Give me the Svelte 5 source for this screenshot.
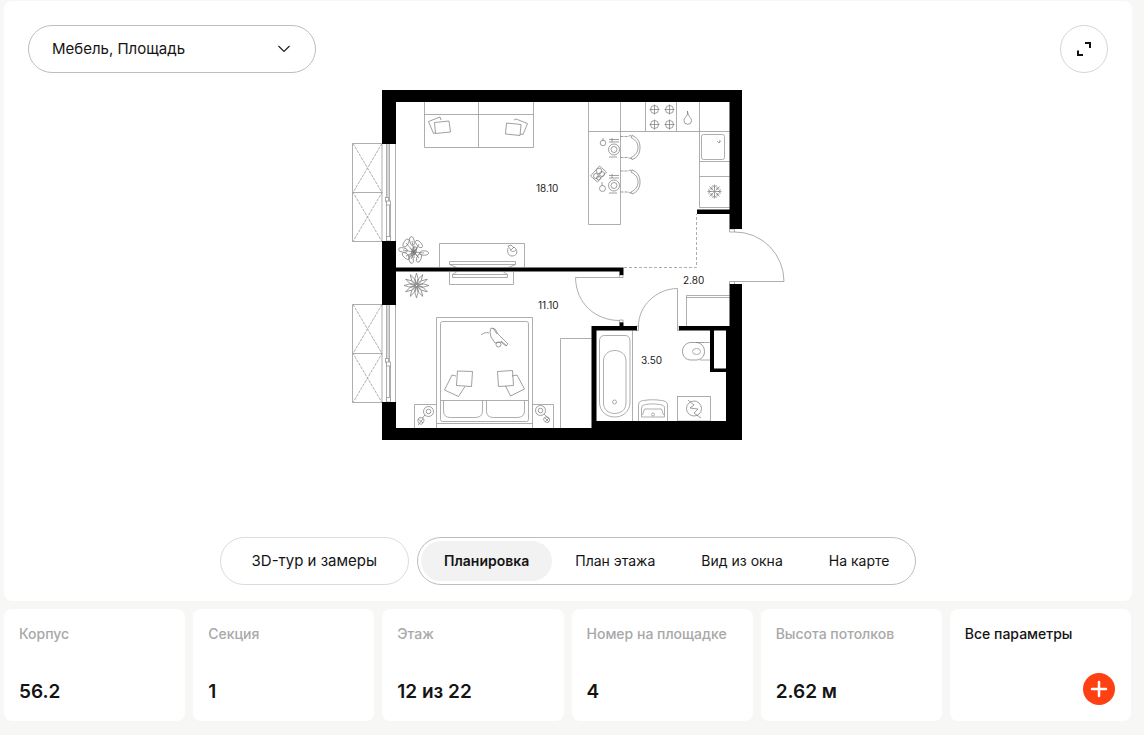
<script lang="ts">
  let filter = $state('furniture-area');
  let activeTab = $state('plan');

  const tabs = [
    { id: 'plan', title: 'Планировка' },
    { id: 'floor', title: 'План этажа' },
    { id: 'view', title: 'Вид из окна' },
    { id: 'map', title: 'На карте' }
  ];

  const params = [
    { label: 'Корпус', value: '56.2' },
    { label: 'Секция', value: '1' },
    { label: 'Этаж', value: '12 из 22' },
    { label: 'Номер на площадке', value: '4' },
    { label: 'Высота потолков', value: '2.62 м' }
  ];

  const rooms = [
    { x: 536, y: 192, area: '18.10' },
    { x: 538, y: 309, area: '11.10' },
    { x: 683, y: 284, area: '2.80' },
    { x: 641, y: 364, area: '3.50' }
  ];

  // top edges of the two balcony windows
  const windows = [143.5, 304.5];

  const burners = [
    [654.5, 109.5],
    [669.5, 109.5],
    [654.5, 124.5],
    [669.5, 124.5]
  ];

  const starLeaves = Array.from({ length: 12 }, (_, i) => i * 30);
  const snowRays = [0, 90, 180, 270];
</script>

<div class="page">
  <section class="viewer">
    <div class="toolbar">
      <div class="filter">
        <select bind:value={filter} aria-label="Отображение на плане">
          <option value="furniture-area">Мебель, Площадь</option>
        </select>
        <svg class="chevron" width="14" height="8" viewBox="0 0 14 8" aria-hidden="true">
          <path d="M1.500 1l5.500 5.500L12.500 1" fill="none" stroke="#222" stroke-width="1.200" />
        </svg>
      </div>
      <button class="expand" type="button" aria-label="На весь экран">
        <svg width="14" height="14" viewBox="0 0 14 14" aria-hidden="true">
          <path d="M8 1h5v5M1 8.500V13h5" fill="none" stroke="#111" stroke-width="2" />
        </svg>
      </button>
    </div>

    <div class="stage">
      <svg class="plan" viewBox="350 90 436 350" role="img" aria-label="Планировка квартиры">
        <g class="thin">
          {#each windows as y}
            <path d="M352.500 {y}H395.500V{y + 98}H352.500ZM352.500 {y + 49}H382M382 {y}v98" />
            <path class="dash" d="M353 {y}l29 49l-29 49M382 {y}l-29 49l29 49" />
            <path d="M386.500 {y}v98M389.500 {y}v98M388 {y}v54M390.500 {y + 60}v35" />
            <rect x="385.500" y={y + 54} width="3" height="4" fill="#fff" />
            <rect x="386.500" y={y + 57.5} width="4" height="4" fill="#fff" />
            <rect x="386.500" y={y + 93} width="4" height="4.500" fill="#fff" />
          {/each}

          <!-- sofa -->
          <path d="M424.500 102V147.500H533.500V102M424.500 114.500H533.500M478.500 102V147.500" />
          <path class="dark" d="M441 120l-1-3-11.500 4.500 5 12 2-1M434.500 122.500l14.500-1.500 1.500 11-15 1.500z" />
          <path class="dark" d="M514 120l2-1 11.500 4.500-4.500 11-3-.5M506.500 123l14.500 1.500-1 11-14.500-1.500z" />

          <!-- tv stands -->
          <path d="M439.500 267V243.500H524.500V267M449.500 261.500H515.500V264.500H449.500ZM449.500 264.500l7 3M515.500 264.500l-7 3" />
          <path d="M449.500 272V284.500H513.500V272M452.500 274.500H507.500V277.500H452.500ZM452.500 274.500l4-2.500M507.500 274.500l-4-2.500" />
          <path class="dark" d="M508 248c-1 4 0 8 4 8s6-3 4-7l-2-2-3 3-3-4 3-1 3 3M510 250c2 2 4 2 6 0" />

          <!-- kitchen -->
          <path d="M588.500 102V224.500H620.500V102M588.500 131.500H729.500M645.500 102V131.500M676.500 102V131.500M699.500 102V207.500H729.500M699.500 161.500H729.500M699.500 176.500H729.500" />
          <rect x="701.500" y="134.500" width="23" height="25" rx="2" />
          <path d="M717 141l2 2 2-2M719 143l1-3" />
          {#each burners as [x, y]}
            <circle class="dark" cx={x} cy={y} r="4" />
            <path class="dark" d="M{x - 5} {y}h10M{x} {y - 5}v10" />
          {/each}
          <path class="dark" d="M687.500 111v3c-1 3-3.500 4-3.500 6.500a3.800 3.800 0 0 0 7.600 0c0-2.500-3-4-3.600-6.500z" />
          <g transform="translate(714.500 191.500)" class="dark">
            {#each snowRays as a}
              <path d="M0 0V-7M-2-6.500l2 2.500 2-2.500M1 -1L5-5M5-2.500L2.500-2.500V-5" transform="rotate({a})" />
            {/each}
          </g>

          <!-- bar stools and place settings -->
          {#each [[147.5, 148], [182, 184]] as [cy, plate]}
            <path class="dark dash" d="M620.500 {cy - 11}h7l5-1.500M620.500 {cy + 10}h7l5 1.500" />
            <path class="dark" d="M632 {cy - 12}c6 2 8 7 8 12s-2 10-8 12l-1-2c4-2 7-5 7-10s-3-8-7-10z" />
            <circle class="dark" cx="614" cy={plate + 1.5} r="5.500" />
            <circle class="dark" cx="614" cy={plate + 1.5} r="3" />
            <path class="dark" d="M609 {plate - 8.5}h10M609 {plate - 6}h10M612 {plate - 10}v4M609 {plate + 9}h8" />
          {/each}
          <path class="dark" d="M603 138v3M602 186v-4" />
          <circle class="dark" cx="603" cy="143" r="2.800" />
          <circle class="dark" cx="602.500" cy="188.500" r="3" />
          <path class="dark" d="M590.500 176l9-10 7 6-9 10z" />
          <circle class="dark" cx="596" cy="176" r="2.500" />
          <circle class="dark" cx="599" cy="171" r="2.800" />
          <circle class="dark" cx="602" cy="174" r="2.500" />
          <circle class="dark" cx="598.500" cy="178" r="2" />

          <!-- hall -->
          <path class="dash-long" d="M624 267.500H696.500V214" />
          <path d="M686.500 326V295.500H729.500M686.500 297.500H729.500" />
          <path d="M729.500 229h5v3h-5zM729.500 281.500h5v3h-5zM734.500 281.500H784A49 49.500 0 0 0 734.500 232" />
          <path d="M619.500 275h3.500v2.500h-3.500zM619.500 320h3.500v2.500h-3.500zM619.500 277.500H575.500C576 304 596 320.500 619.500 320.500" />
          <path d="M636.500 326h2v4.500h-2zM677 288.500h.5V330.500h1.500v-4.500M677 288.500C656 289 638.500 306 638.500 326" />

          <!-- bedroom -->
          <path d="M560.500 428V338.500H591.500M436.500 428V317.500H532.500V428M440.500 400.500H528.500M436.500 423.500H532.500" />
          <rect x="440.500" y="321.500" width="88" height="100" rx="2" />
          <path d="M443.500 400.500V411q0 6.500 7 6.500H475q7.500 0 7.500-6.500V400.500M486.500 400.500V411q0 6.500 7 6.500H517q7.500 0 7.500-6.500V400.500" />
          <path d="M436.500 404.500H414.500V428M532.500 404.500H553.500V428" />
          <path class="dark" d="M457.500 371l15 .5-1 15-15-1zM456 376l-4-1-7.500 15 14 6.500 6.500-10" />
          <path class="dark" d="M497.500 371.500l15-1 1 15-15 1zM512 376l5-1 7.500 14-14 7-5-10" />
          <circle class="dark" cx="428.500" cy="411.500" r="5" />
          <circle class="dark" cx="428.500" cy="411.500" r="2.300" />
          <path class="dark" d="M425 415l-3 3.500M419 418c-2 2-1 5 1 6s4-2 4-4-2-3-5-2zM418 425l5-6M418 419l5 4" />
          <circle class="dark" cx="540.500" cy="410.500" r="5" />
          <circle class="dark" cx="540.500" cy="410.500" r="2.300" />
          <path class="dark" d="M544 414l4 4M544 418c2-2 5-1 5.500 1s-1 4-3 3.500-3.500-3-2.500-4.500zM545 422l4-4M545 418l4 4" />
          <path class="dark" d="M481 335c2-2 5-3 8-2M490 332l1-4 4 1 3 5 6 6 4 4-2 2-5-4-6 1-4-6-1-5zM493 328l4 6M501 341l6 5" />
          <circle class="dark" cx="498.500" cy="344.500" r="2.500" />

          <!-- bathroom -->
          <path d="M632.500 330.500V421M599.500 341q0-5.500 5-5.500H625q5 0 5 5.500V402c0 20-30.500 20-30.500 0z" />
          <path d="M603.500 361c0-14 22.500-14 22.500 0v42c0 14-22.500 14-22.500 0z" />
          <circle cx="614.500" cy="402" r="2" />
          <path d="M638.500 421V405q0-4 5-4.500c6-1 12-1 18 0q6 .5 6 4.500v16M641.500 417v-9q0-3 4-3.500c6-.8 8-.8 14 0q5 .5 5 3.500v9z" />
          <path d="M642.500 415l2-6h17l2 6" />
          <circle cx="653" cy="414.500" r="1.500" />
          <path class="dark" d="M704 342.500H691c-5 0-8.500 4-8.500 9s3.500 8.500 8.500 8.500h5c5 0 8.500-3.500 8.500-8.500s-3.500-9-8.500-9" />
          <path d="M704 342.500h6M700 360h10" />
          <ellipse cx="696.500" cy="351.500" rx="4" ry="3" />
          <rect x="677.500" y="396.500" width="33" height="24.500" />
          <circle class="dark" cx="694" cy="408.500" r="7.500" />
          <path class="dark" d="M688 400l6 5-4 3 8 1-4 4 7 5" />

          <!-- plants -->
          <g class="dark">
            {#each [[403, 250, 100], [406, 243, 30], [412, 241, -10], [419, 244, -40], [424, 253, -90], [419, 258, -160], [411, 259, 165], [406, 256, 130], [414, 251, 20]] as [x, y, a]}
              <ellipse cx={x} cy={y} rx="2.200" ry="4.500" transform="rotate({a} {x} {y})" />
              <path d="M{x} {y}L414 252" />
            {/each}
            <circle cx="414" cy="252" r="2" />
            <path d="M410 248l8 9M418 247l-8 10M414 246v12" />
          </g>
          <g transform="translate(416.500 285.500)" class="dark">
            {#each starLeaves as a}
              <path d="M0-1L-1.500-7 0-12.500 1.500-7z" transform="rotate({a})" />
            {/each}
          </g>
        </g>

        <g class="wall">
          <path d="M382 90H742V229H729.500V102H396V144H382Z" />
          <path d="M382 241H396V267.500H623.500V275H619.500V271.500H396V305H382Z" />
          <path d="M382 402H396V428H591.500V326H637V330.500H596.500V421H726V372H710V330.500H679V326H729.500V284H742V440H382ZM714 330.500V368.500H726V330.500Z" fill-rule="evenodd" />
          <rect x="619.500" y="322.500" width="4" height="4" />
          <rect x="697" y="209.500" width="33" height="4.500" />
        </g>

        {#each rooms as room}
          <text x={room.x} y={room.y}>{room.area}</text>
        {/each}
      </svg>
    </div>

    <div class="controls">
      <button class="tour" type="button">3D-тур и замеры</button>
      <div class="tabs" role="tablist">
        {#each tabs as tab}
          <button
            type="button"
            role="tab"
            class="tab"
            class:active={activeTab === tab.id}
            aria-selected={activeTab === tab.id}
            onclick={() => (activeTab = tab.id)}
          >
            {tab.title}
          </button>
        {/each}
      </div>
    </div>
  </section>

  <section class="params">
    {#each params as param}
      <div class="card">
        <span class="label">{param.label}</span>
        <span class="value">{param.value}</span>
      </div>
    {/each}
    <button class="card" type="button">
      <span>Все параметры</span>
      <svg class="plus" width="32" height="32" viewBox="0 0 32 32" aria-hidden="true">
        <circle cx="16" cy="16" r="16" fill="#ff4013" />
        <path d="M16 9v14M9 16h14" stroke="#fff" stroke-width="2.500" stroke-linecap="round" />
      </svg>
    </button>
  </section>
</div>

<style>
  :global(body) {
    margin: 0;
    background: #f7f7f6;
  }

  .page {
    padding: 1px 12px 14px 4px;
    font-family: Inter, 'Liberation Sans', sans-serif;
    color: #141414;
  }

  button,
  select {
    font-family: inherit;
    color: inherit;
    cursor: pointer;
  }

  .viewer {
    padding: 24px 24px 16px;
    border-radius: 8px;
    background: #fff;
  }

  .toolbar {
    display: flex;
    justify-content: space-between;
  }

  .filter {
    display: grid;
    align-items: center;
    width: 288px;
  }

  .filter select {
    grid-area: 1 / 1;
    height: 48px;
    padding: 0 48px 2px 23px;
    border: 1px solid #bdbdbd;
    border-radius: 24px;
    background: #fff;
    font-size: 15px;
    appearance: none;
  }

  .chevron {
    grid-area: 1 / 1;
    justify-self: end;
    margin-right: 25px;
    pointer-events: none;
  }

  .expand {
    display: flex;
    align-items: center;
    justify-content: center;
    width: 48px;
    height: 48px;
    padding: 0;
    border: 1px solid #d6d6d6;
    border-radius: 50%;
    background: #fff;
  }

  .stage {
    display: flex;
    justify-content: center;
    margin: 17px 0 97px;
  }

  .plan {
    width: 436px;
    max-width: 100%;
  }

  .thin {
    fill: none;
    stroke: #999;
    stroke-width: 0.8;
  }

  .dark {
    stroke: #777;
    stroke-width: 0.7;
  }

  .dash {
    stroke-dasharray: 3 1;
  }

  .dash-long {
    stroke-dasharray: 3 2;
  }

  .wall {
    fill: #000;
  }

  .plan text {
    font-size: 10px;
    fill: #222;
  }

  .controls {
    display: flex;
    justify-content: center;
    gap: 8px;
  }

  .tour {
    height: 48px;
    padding: 0 31px 2px;
    border: 1px solid #dcdcdc;
    border-radius: 24px;
    background: #fff;
    font-size: 15px;
  }

  .tabs {
    display: flex;
    box-sizing: border-box;
    height: 48px;
    padding: 3px;
    border: 1px solid #bdbdbd;
    border-radius: 24px;
  }

  .tab {
    padding: 0 23px 2px;
    border: 0;
    border-radius: 20px;
    background: none;
    font-size: 14px;
  }

  .tab.active {
    background: #f2f2f2;
    font-weight: 600;
  }

  .params {
    display: grid;
    grid-template-columns: repeat(6, minmax(0, 1fr));
    gap: 8px;
    margin: 8px 1px 0 0;
  }

  .card {
    display: flex;
    flex-direction: column;
    justify-content: space-between;
    box-sizing: border-box;
    height: 112px;
    padding: 16px 16px 16px 15px;
    border: 0;
    border-radius: 8px;
    background: #fff;
    font-size: 14px;
    font-weight: 500;
    line-height: 18px;
    text-align: left;
  }

  .label {
    color: #a8a8a8;
  }

  .value {
    font-size: 19px;
    font-weight: 600;
    line-height: 26px;
  }

  .plus {
    align-self: flex-end;
  }
</style>
